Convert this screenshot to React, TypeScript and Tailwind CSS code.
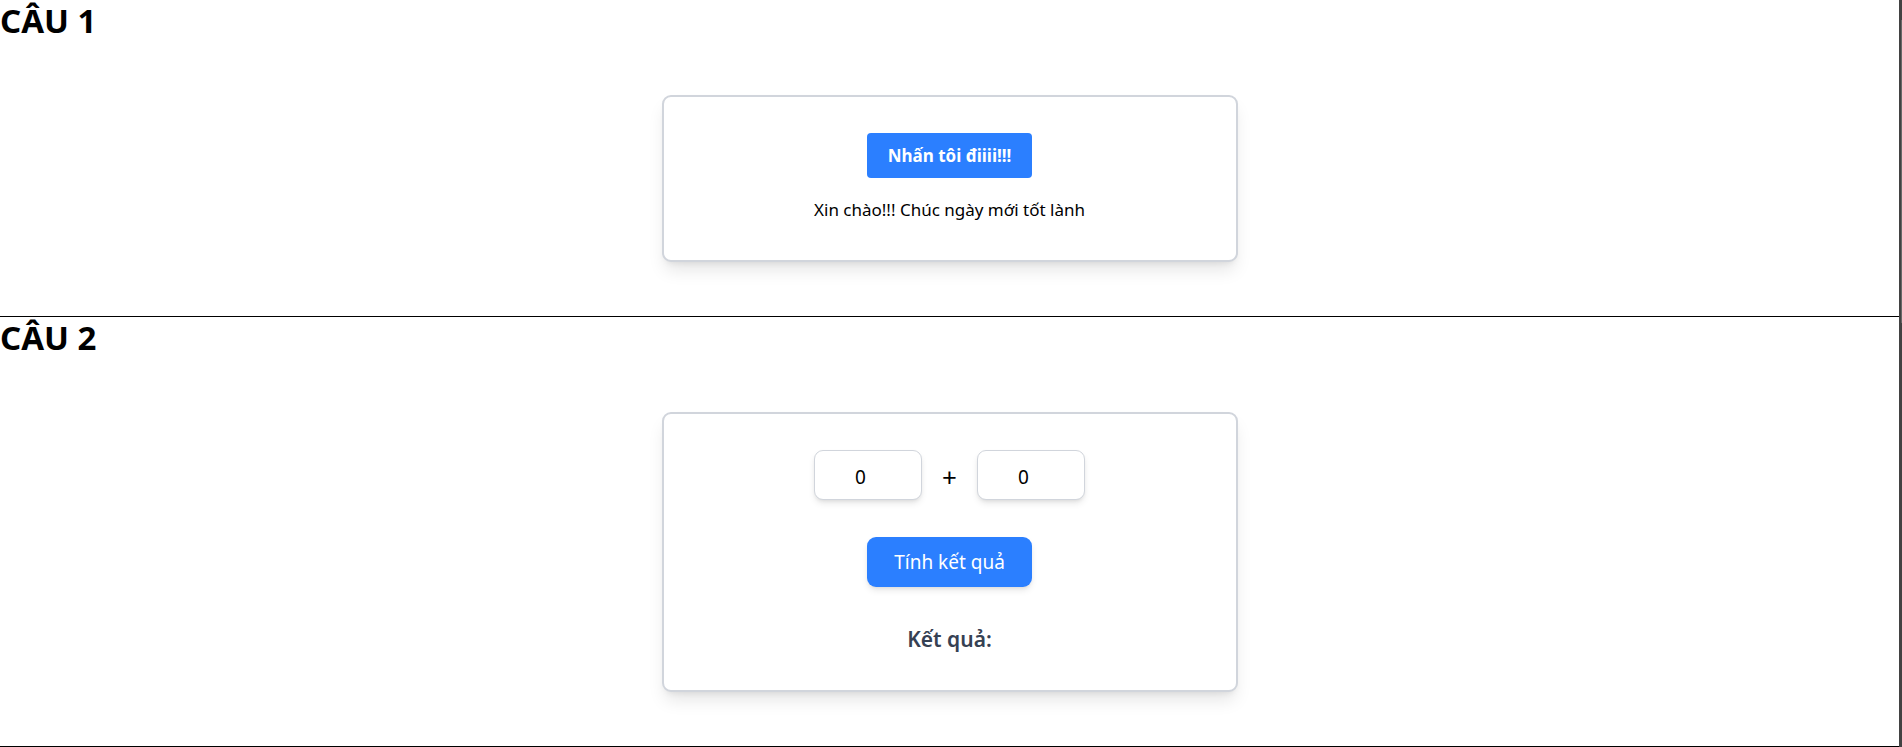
import { useState } from "react";
import type { ReactNode } from "react";

function Section({ title, children }: { title: string; children: ReactNode }) {
  return (
    <section className="border-b border-black">
      <h1 className="text-[33px] font-bold leading-[41px]">{title}</h1>
      <div className="mx-auto my-[54px] flex max-w-xl flex-col items-center rounded-[9px] border-2 border-gray-300 bg-white p-[36px] shadow-[0_11px_17px_-3px_rgb(0_0_0/0.1),0_4px_7px_-4px_rgb(0_0_0/0.1)]">
        {children}
      </div>
    </section>
  );
}

function Greeting() {
  const [visible, setVisible] = useState(true);
  return (
    <Section title="CÂU 1">
      <button
        type="button"
        onClick={() => setVisible(!visible)}
        className="h-[45px] w-[165px] rounded bg-[#2b7fff] font-bold leading-7 whitespace-nowrap text-white"
      >
        Nhấn tôi điiii!!!
      </button>
      <p className="mt-[18px] leading-7">
        {visible ? "Xin chào!!! Chúc ngày mới tốt lành" : "\u00a0"}
      </p>
    </Section>
  );
}

const fieldClass =
  "h-[50px] w-[108px] rounded-[9px] border border-gray-300 bg-white px-[18px] pt-1 text-center text-[19px] shadow-[0_4px_7px_-1px_rgb(0_0_0/0.1),0_2px_4px_-2px_rgb(0_0_0/0.1)]";

function Calculator() {
  const [a, setA] = useState("0");
  const [b, setB] = useState("0");
  const [sum, setSum] = useState("");
  return (
    <Section title="CÂU 2">
      <div className="flex items-center gap-[18px]">
        <input
          type="number"
          aria-label="a"
          value={a}
          onChange={(e) => setA(e.target.value)}
          className={fieldClass}
        />
        <span className="w-[19px] pt-1 text-center text-[26px] leading-9">+</span>
        <input
          type="number"
          aria-label="b"
          value={b}
          onChange={(e) => setB(e.target.value)}
          className={fieldClass}
        />
      </div>
      <button
        type="button"
        onClick={() => setSum(String(Number(a) + Number(b)))}
        className="mt-[37px] h-[50px] w-[165px] rounded-[9px] bg-[#2b7fff] text-[19px] text-white shadow-[0_4px_7px_-1px_rgb(0_0_0/0.1),0_2px_4px_-2px_rgb(0_0_0/0.1)]"
      >
        Tính kết quả
      </button>
      <p className="mt-[37px] text-[21px] font-semibold leading-[30px] text-gray-700">
        Kết quả: {sum}
      </p>
    </Section>
  );
}

export default function App() {
  return (
    <div className="flex min-h-screen bg-white font-['Noto_Sans','Open_Sans',sans-serif] text-[17px] text-black">
      <main className="flex-1">
        <Greeting />
        <Calculator />
      </main>
      <div className="flex w-[3px] justify-end bg-[#424242] pt-[20px]">
        <div className="h-[303px] w-px bg-[#686868]" />
      </div>
    </div>
  );
}
